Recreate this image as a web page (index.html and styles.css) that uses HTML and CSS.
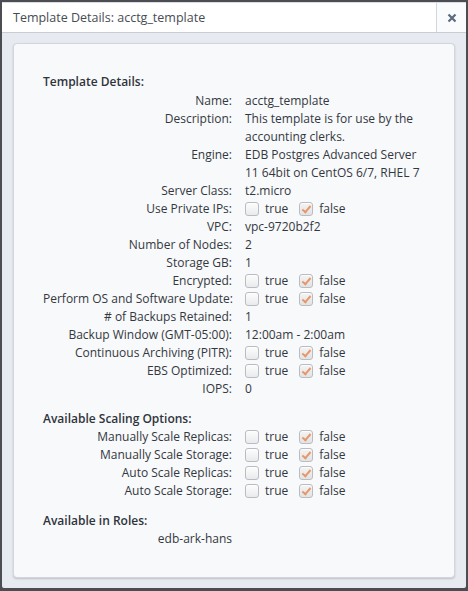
FILE: index.html
```html
<!DOCTYPE html>
<html>
<head>
<meta charset="utf-8">
<link rel="stylesheet" href="styles.css">
</head>
<body>
<div class="window">
  <div class="header">
    <div class="title">Template Details: acctg_template</div>
    <div class="close"><svg width="10" height="10" viewBox="0 0 10 10"><path d="M1.5 1.5 L8.5 8.5 M8.5 1.5 L1.5 8.5" stroke="#5b6a7e" stroke-width="2.2" stroke-linecap="butt"/></svg></div>
  </div>
  <div class="body">
    <div class="panel">
      <div class="section-title">Template Details:</div>
      <div class="grid first">
        <div class="lbl">Name:</div><div class="val">acctg_template</div>
        <div class="lbl">Description:</div><div class="val">This template is for use by the<br>accounting clerks.</div>
        <div class="lbl">Engine:</div><div class="val">EDB Postgres Advanced Server<br>11 64bit on CentOS 6/7, RHEL 7</div>
        <div class="lbl">Server Class:</div><div class="val">t2.micro</div>
        <div class="lbl">Use Private IPs:</div><div class="val opts"><span class="cb"></span><span class="opt">true</span><span class="cb on"></span><span class="opt">false</span></div>
        <div class="lbl">VPC:</div><div class="val">vpc-9720b2f2</div>
        <div class="lbl">Number of Nodes:</div><div class="val">2</div>
        <div class="lbl">Storage GB:</div><div class="val">1</div>
        <div class="lbl">Encrypted:</div><div class="val opts"><span class="cb"></span><span class="opt">true</span><span class="cb on"></span><span class="opt">false</span></div>
        <div class="lbl">Perform OS and Software Update:</div><div class="val opts"><span class="cb"></span><span class="opt">true</span><span class="cb on"></span><span class="opt">false</span></div>
        <div class="lbl"># of Backups Retained:</div><div class="val">1</div>
        <div class="lbl">Backup Window (GMT-05:00):</div><div class="val">12:00am - 2:00am</div>
        <div class="lbl">Continuous Archiving (PITR):</div><div class="val opts"><span class="cb"></span><span class="opt">true</span><span class="cb on"></span><span class="opt">false</span></div>
        <div class="lbl">EBS Optimized:</div><div class="val opts"><span class="cb"></span><span class="opt">true</span><span class="cb on"></span><span class="opt">false</span></div>
        <div class="lbl">IOPS:</div><div class="val">0</div>
      </div>
      <div class="section-title spaced">Available Scaling Options:</div>
      <div class="grid">
        <div class="lbl">Manually Scale Replicas:</div><div class="val opts"><span class="cb"></span><span class="opt">true</span><span class="cb on"></span><span class="opt">false</span></div>
        <div class="lbl">Manually Scale Storage:</div><div class="val opts"><span class="cb"></span><span class="opt">true</span><span class="cb on"></span><span class="opt">false</span></div>
        <div class="lbl">Auto Scale Replicas:</div><div class="val opts"><span class="cb"></span><span class="opt">true</span><span class="cb on"></span><span class="opt">false</span></div>
        <div class="lbl">Auto Scale Storage:</div><div class="val opts"><span class="cb"></span><span class="opt">true</span><span class="cb on"></span><span class="opt">false</span></div>
      </div>
      <div class="section-title spaced">Available in Roles:</div>
      <div class="grid">
        <div class="lbl role">edb-ark-hans</div><div class="val"></div>
      </div>
    </div>
  </div>
</div>
</body>
</html>
```

FILE: styles.css
```css
* { box-sizing: border-box; }
html, body { margin: 0; padding: 0; }
body {
  width: 468px;
  height: 591px;
  background: #4b4d52;
  padding: 2px 2px 3px 2px;
  font-family: "Open Sans", "Noto Sans", sans-serif;
  font-size: 12px;
  color: #333840;
}
.window {
  height: 100%;
  background: #e7eaf1;
  border-radius: 2px;
  display: flex;
  flex-direction: column;
}
.header {
  height: 31px;
  background: #ffffff;
  border-top: 1px solid #d9dce2;
  border-bottom: 1px solid #c9ccd3;
  display: flex;
  align-items: stretch;
}
.title {
  flex: 1;
  padding-left: 11px;
  display: flex;
  align-items: center;
  font-size: 12.5px;
  color: #474c54;
}
.close {
  width: 30px;
  border-left: 1px solid #d3d6dc;
  background: #fafbfc;
  display: flex;
  align-items: center;
  justify-content: center;
}
.body {
  flex: 1;
  padding: 10px 11px 10px 11px;
  display: flex;
}
.panel {
  flex: 1;
  background: #f8f9fb;
  border: 1px solid #d3d6dc;
  border-radius: 4px;
  box-shadow: 0 1px 2px rgba(0,0,0,0.18);
  padding: 29px 29px 29px 29px;
}
.section-title {
  font-weight: 600;
  line-height: 18px;
  color: #2f343b;
}
.section-title.spaced { margin-top: 12px; }
.grid {
  display: grid;
  grid-template-columns: 189px 1fr;
  column-gap: 13px;
  line-height: 18px;
}
.grid.first { margin-top: 1px; }
.lbl { text-align: right; white-space: nowrap; }
.val { white-space: nowrap; }
.opts { display: flex; align-items: center; height: 18px; }
.cb {
  width: 14px;
  height: 14px;
  border: 1px solid #b9bcc2;
  border-radius: 3px;
  background: linear-gradient(#fdfdfd, #e9eaec);
  box-shadow: inset 0 1px 1px rgba(255,255,255,0.8);
  position: relative;
}
.cb.on {
  background: linear-gradient(#f3f3f3, #e2e3e5);
}
.cb.on::after {
  content: "";
  position: absolute;
  left: 4px;
  top: 1px;
  width: 3px;
  height: 7px;
  border-right: 2px solid #e9976a;
  border-bottom: 2px solid #e9976a;
  transform: rotate(40deg);
}
.opt { margin-left: 6px; margin-right: 11px; }
.role { color: #333840; }
```
